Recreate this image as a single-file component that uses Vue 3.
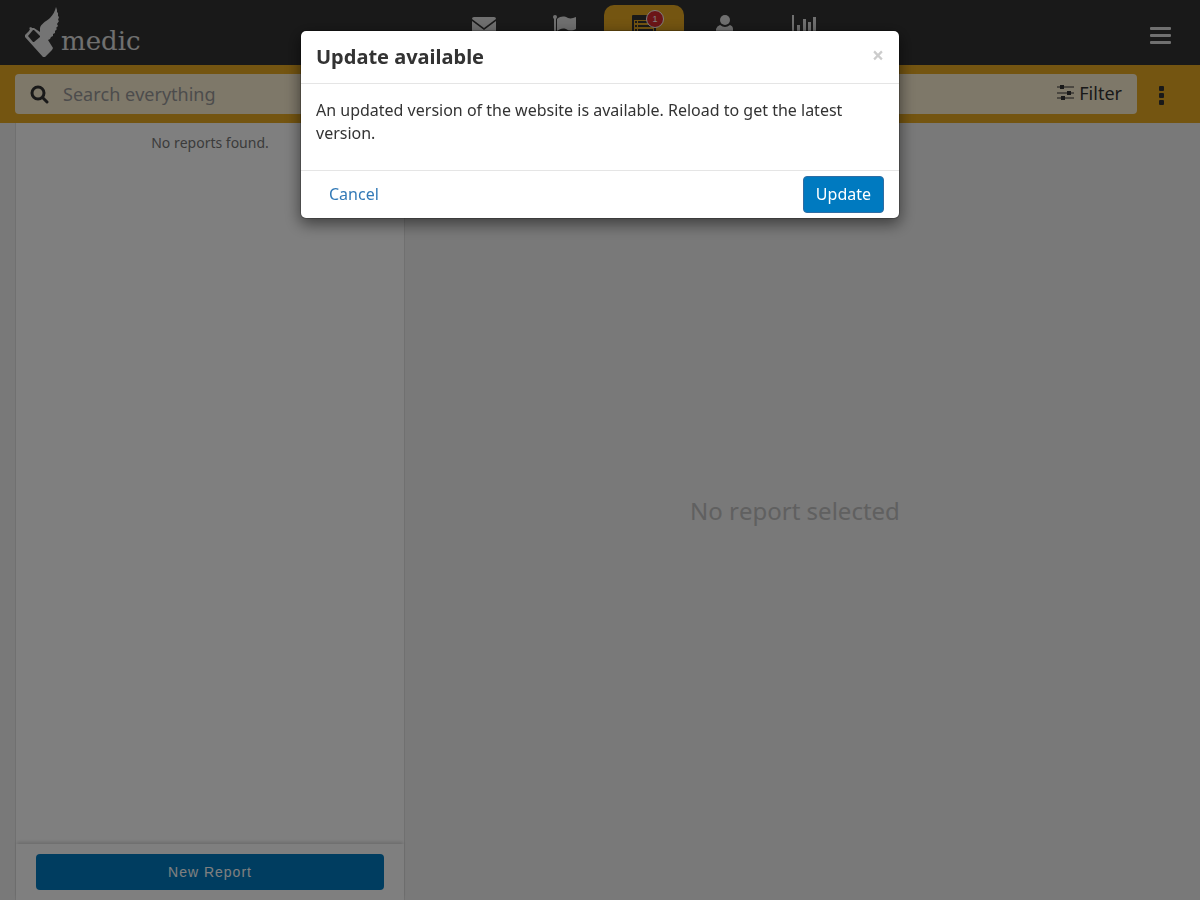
<script setup>
import { ref } from 'vue'

const search = ref('')
const tabs = ['Messages', 'Tasks', 'Reports', 'Contacts', 'Analytics']
</script>

<template>
  <div class="page">
    <header class="header">
      <a class="logo" href="#" aria-label="medic">
        <svg class="bird" viewBox="0 0 36 52" aria-hidden="true">
          <path class="fill" d="M31 1L32 4L32 6L33 7L33 10L34 11L33 14L34 15L32 18L33 20L31 22L32 23L30 25L30 27L28 28L28 30L26 31L25 33L23 34L28 42L27 44L20 51H18L0 31V29L4 25L5 23L4 22L6 21L7 22L9 22L15 26L15 22C16 18 20 16 25 12C28 9 30 5 31 1Z" />
          <path class="hole" d="M8 24L9 24L15 30L15 31L9 36L8 36L3 30Z" />
        </svg>
        <span class="brand">medic</span>
      </a>
      <nav class="tabs" aria-label="Main">
        <a v-for="(tab, i) in tabs" :key="tab" href="#" class="tab" :class="{ active: i === 2 }" :aria-label="tab">
          <svg class="tab-icon" viewBox="0 0 24 24" aria-hidden="true">
            <g v-if="i === 0">
              <path d="M2 2H22Q24 2 24 4L12 13L0 4Q0 2 2 2Z" />
              <path d="M0 6L12 15L24 6V20H0Z" />
            </g>
            <g v-else-if="i === 1">
              <circle cx="3" cy="2" r="2" />
              <path d="M2 3H4V24H2Z" />
              <path d="M5 4C9 1 12 1 16 3C19 4 21 3 24 2V14C20 16 17 16 14 14C10 13 8 14 5 16Z" />
            </g>
            <g v-else-if="i === 2">
              <path fill-rule="evenodd" d="M1 0H23Q24 0 24 1V24H0V1Q0 0 1 0ZM2 5V22H22V5ZM3 6H5V8H3ZM6 6H21V8H6ZM3 10H5V12H3ZM6 10H21V12H6ZM3 14H5V16H3ZM6 14H21V16H6Z" />
            </g>
            <g v-else-if="i === 3">
              <circle cx="13" cy="5" r="5" />
              <path d="M8 10Q13 14 18 10Q21 11 21 14V22H4V14Q5 11 8 10Z" />
            </g>
            <g v-else>
              <path d="M0 0H2V22H24V24H0ZM5 10H8V20H5ZM11 4H14V20H11ZM16 7H19V20H16ZM21 2H24V20H21Z" />
            </g>
          </svg>
          <span v-if="i === 2" class="badge">1</span>
        </a>
      </nav>
      <button class="menu" type="button" aria-label="Menu">
        <svg viewBox="0 0 21 18" aria-hidden="true">
          <path d="M1 0H20Q21 0 21 1V2Q21 3 20 3H1Q0 3 0 2V1Q0 0 1 0ZM1 7H20Q21 7 21 8V9Q21 10 20 10H1Q0 10 0 9V8Q0 7 1 7ZM1 14H20Q21 14 21 15V16Q21 17 20 17H1Q0 17 0 16V15Q0 14 1 14Z" />
        </svg>
      </button>
    </header>

    <div class="toolbar">
      <div class="search">
        <svg class="search-icon" viewBox="0 0 20 20" aria-hidden="true">
          <circle cx="8" cy="9" r="6" />
          <path d="M13 14L17 18" />
        </svg>
        <input v-model="search" class="search-input" type="text" placeholder="Search everything" aria-label="Search everything">
        <button class="filter" type="button">
          <svg class="filter-icon" viewBox="0 0 17 16" aria-hidden="true">
            <path class="rail" d="M0 2H17M0 8H17M0 13H17" />
            <path d="M3 0H7V4H3ZM10 6H14V10H10ZM4 11H8V15H4Z" />
          </svg>
          Filter
        </button>
      </div>
      <button class="more" type="button" aria-label="More actions">
        <svg viewBox="0 0 5 19" aria-hidden="true">
          <rect width="5" height="5" rx="1" />
          <rect y="7" width="5" height="5" rx="1" />
          <rect y="14" width="5" height="5" rx="1" />
        </svg>
      </button>
    </div>

    <main class="content">
      <section class="list">
        <p class="empty">No reports found.</p>
        <div class="actions">
          <button class="new-report" type="button">New Report</button>
        </div>
      </section>
      <section class="detail">No report selected</section>
    </main>

    <div class="backdrop">
      <div class="modal" role="dialog" aria-modal="true" aria-labelledby="modal-title">
        <div class="modal-header">
          <h2 id="modal-title">Update available</h2>
          <button class="close" type="button" aria-label="Close">×</button>
        </div>
        <div class="modal-body">
          <p>An updated version of the website is available. Reload to get the latest version.</p>
        </div>
        <div class="modal-footer">
          <button class="btn link" type="button">Cancel</button>
          <button class="btn primary" type="button">Update</button>
        </div>
      </div>
    </div>
  </div>
</template>

<style>
body {
  margin: 0;
}
</style>

<style scoped>
* {
  box-sizing: border-box;
}
button {
  border: 0;
  padding: 0;
  background: none;
  font: inherit;
  cursor: pointer;
}
.page {
  display: flex;
  flex-direction: column;
  height: 100vh;
  background: #f2f2f2;
  color: #333;
  font-family: "Noto Sans", sans-serif;
  font-size: 16px;
  font-kerning: none;
}
.header {
  display: flex;
  height: 65px;
  flex: none;
  background: #333;
}
.logo {
  display: flex;
  width: 168px;
  padding: 6px 0 0 25px;
  color: #e0e0e0;
  text-decoration: none;
}
.bird {
  flex: none;
  width: 36px;
  height: 52px;
}
.bird .fill {
  fill: #e8e8e8;
}
.bird .hole {
  fill: #333;
}
.brand {
  padding-top: 18px;
  font-family: "DejaVu Serif", serif;
  font-size: 26px;
  line-height: 34px;
}
.tabs {
  display: flex;
  flex: 1;
  justify-content: center;
  padding-top: 5px;
}
.tab {
  position: relative;
  display: flex;
  justify-content: center;
  width: 80px;
  padding-top: 10px;
  border-radius: 10px 10px 0 0;
}
.tab.active {
  background: #e9aa22;
}
.tab-icon {
  width: 24px;
  height: 24px;
  fill: #e0e0e0;
}
.tab.active .tab-icon {
  fill: #333;
}
.badge {
  position: absolute;
  top: 5px;
  right: 20px;
  width: 18px;
  height: 18px;
  border: 1px solid #fff;
  border-radius: 50%;
  background: #d92b2f;
  color: #fff;
  font-family: "Liberation Sans", sans-serif;
  font-size: 9px;
  line-height: 16px;
  text-align: center;
}
.menu {
  width: 80px;
  padding-top: 12px;
}
.menu svg {
  width: 21px;
  height: 18px;
  fill: #e0e0e0;
}
.toolbar {
  display: flex;
  align-items: center;
  flex: none;
  height: 58px;
  padding-left: 15px;
  background: #e9aa22;
}
.search {
  display: flex;
  align-items: center;
  flex: 1;
  height: 40px;
  padding: 0 15px;
  border-radius: 4px;
  background: #fdf0d3;
  font-size: 18px;
}
.search-icon {
  width: 20px;
  height: 20px;
  fill: none;
  stroke: #333;
  stroke-width: 3;
  stroke-linecap: round;
}
.search-input {
  flex: 1;
  min-width: 0;
  height: 40px;
  padding: 0 13px;
  border: 0;
  background: none;
  color: #333;
  font: inherit;
}
.search-input::placeholder {
  color: #999;
}
.filter {
  display: flex;
  align-items: center;
  gap: 5px;
  padding-bottom: 2px;
  color: #333;
}
.filter-icon {
  width: 17px;
  height: 16px;
  fill: #333;
}
.filter-icon .rail {
  stroke: #333;
  stroke-width: 1;
}
.more {
  width: 63px;
  padding: 7px 14px 0 0;
}
.more svg {
  width: 5px;
  height: 19px;
  fill: #333;
}
.content {
  display: flex;
  flex: 1;
  min-height: 0;
  padding: 0 15px;
}
.list {
  display: flex;
  flex-direction: column;
  justify-content: space-between;
  width: 33.33%;
  border: solid #e0e0e0;
  border-width: 0 1px;
  background: #fff;
}
.empty {
  margin: 10px 0 0;
  color: #777;
  font-size: 14px;
  line-height: 20px;
  text-align: center;
}
.actions {
  padding: 10px 20px;
  box-shadow: 0 -3px 3px -1px rgba(0, 0, 0, 0.15);
}
.new-report {
  display: block;
  width: 100%;
  height: 36px;
  border-radius: 4px;
  background: #007ac0;
  color: #fff;
  font-family: "Liberation Sans", sans-serif;
  font-size: 14px;
  letter-spacing: 1px;
}
.detail {
  display: flex;
  flex: 1;
  align-items: center;
  justify-content: center;
  padding-bottom: 2px;
  color: #c0c0c0;
  font-size: 24px;
}
.backdrop {
  position: fixed;
  inset: 0;
  padding: 30px 15px;
  background: rgba(0, 0, 0, 0.5);
}
.modal {
  max-width: 600px;
  margin: 0 auto;
  border: 1px solid rgba(0, 0, 0, 0.2);
  border-radius: 6px;
  background: #fff;
  background-clip: padding-box;
  box-shadow: 0 5px 15px rgba(0, 0, 0, 0.5);
}
.modal-header {
  display: flex;
  justify-content: space-between;
  padding: 12px 15px;
  border-bottom: 1px solid #e5e5e5;
}
.modal-header h2 {
  margin: 0;
  font-size: 20px;
  font-weight: 700;
  line-height: 28px;
}
.close {
  height: 24px;
  color: #ccc;
  font-size: 21px;
  font-weight: 700;
  line-height: 24px;
}
.modal-body {
  padding: 15px;
}
.modal-body p {
  margin: 0 0 10px;
  line-height: 23px;
}
.modal-footer {
  display: flex;
  justify-content: space-between;
  padding: 5px 15px;
  border-top: 1px solid #e5e5e5;
}
.btn {
  height: 37px;
  padding: 0 12px 2px;
  border: 1px solid transparent;
  border-radius: 4px;
}
.btn.link {
  color: #337ab7;
}
.btn.primary {
  border-color: #2e6da4;
  background: #007ac0;
  color: #fff;
}
</style>
